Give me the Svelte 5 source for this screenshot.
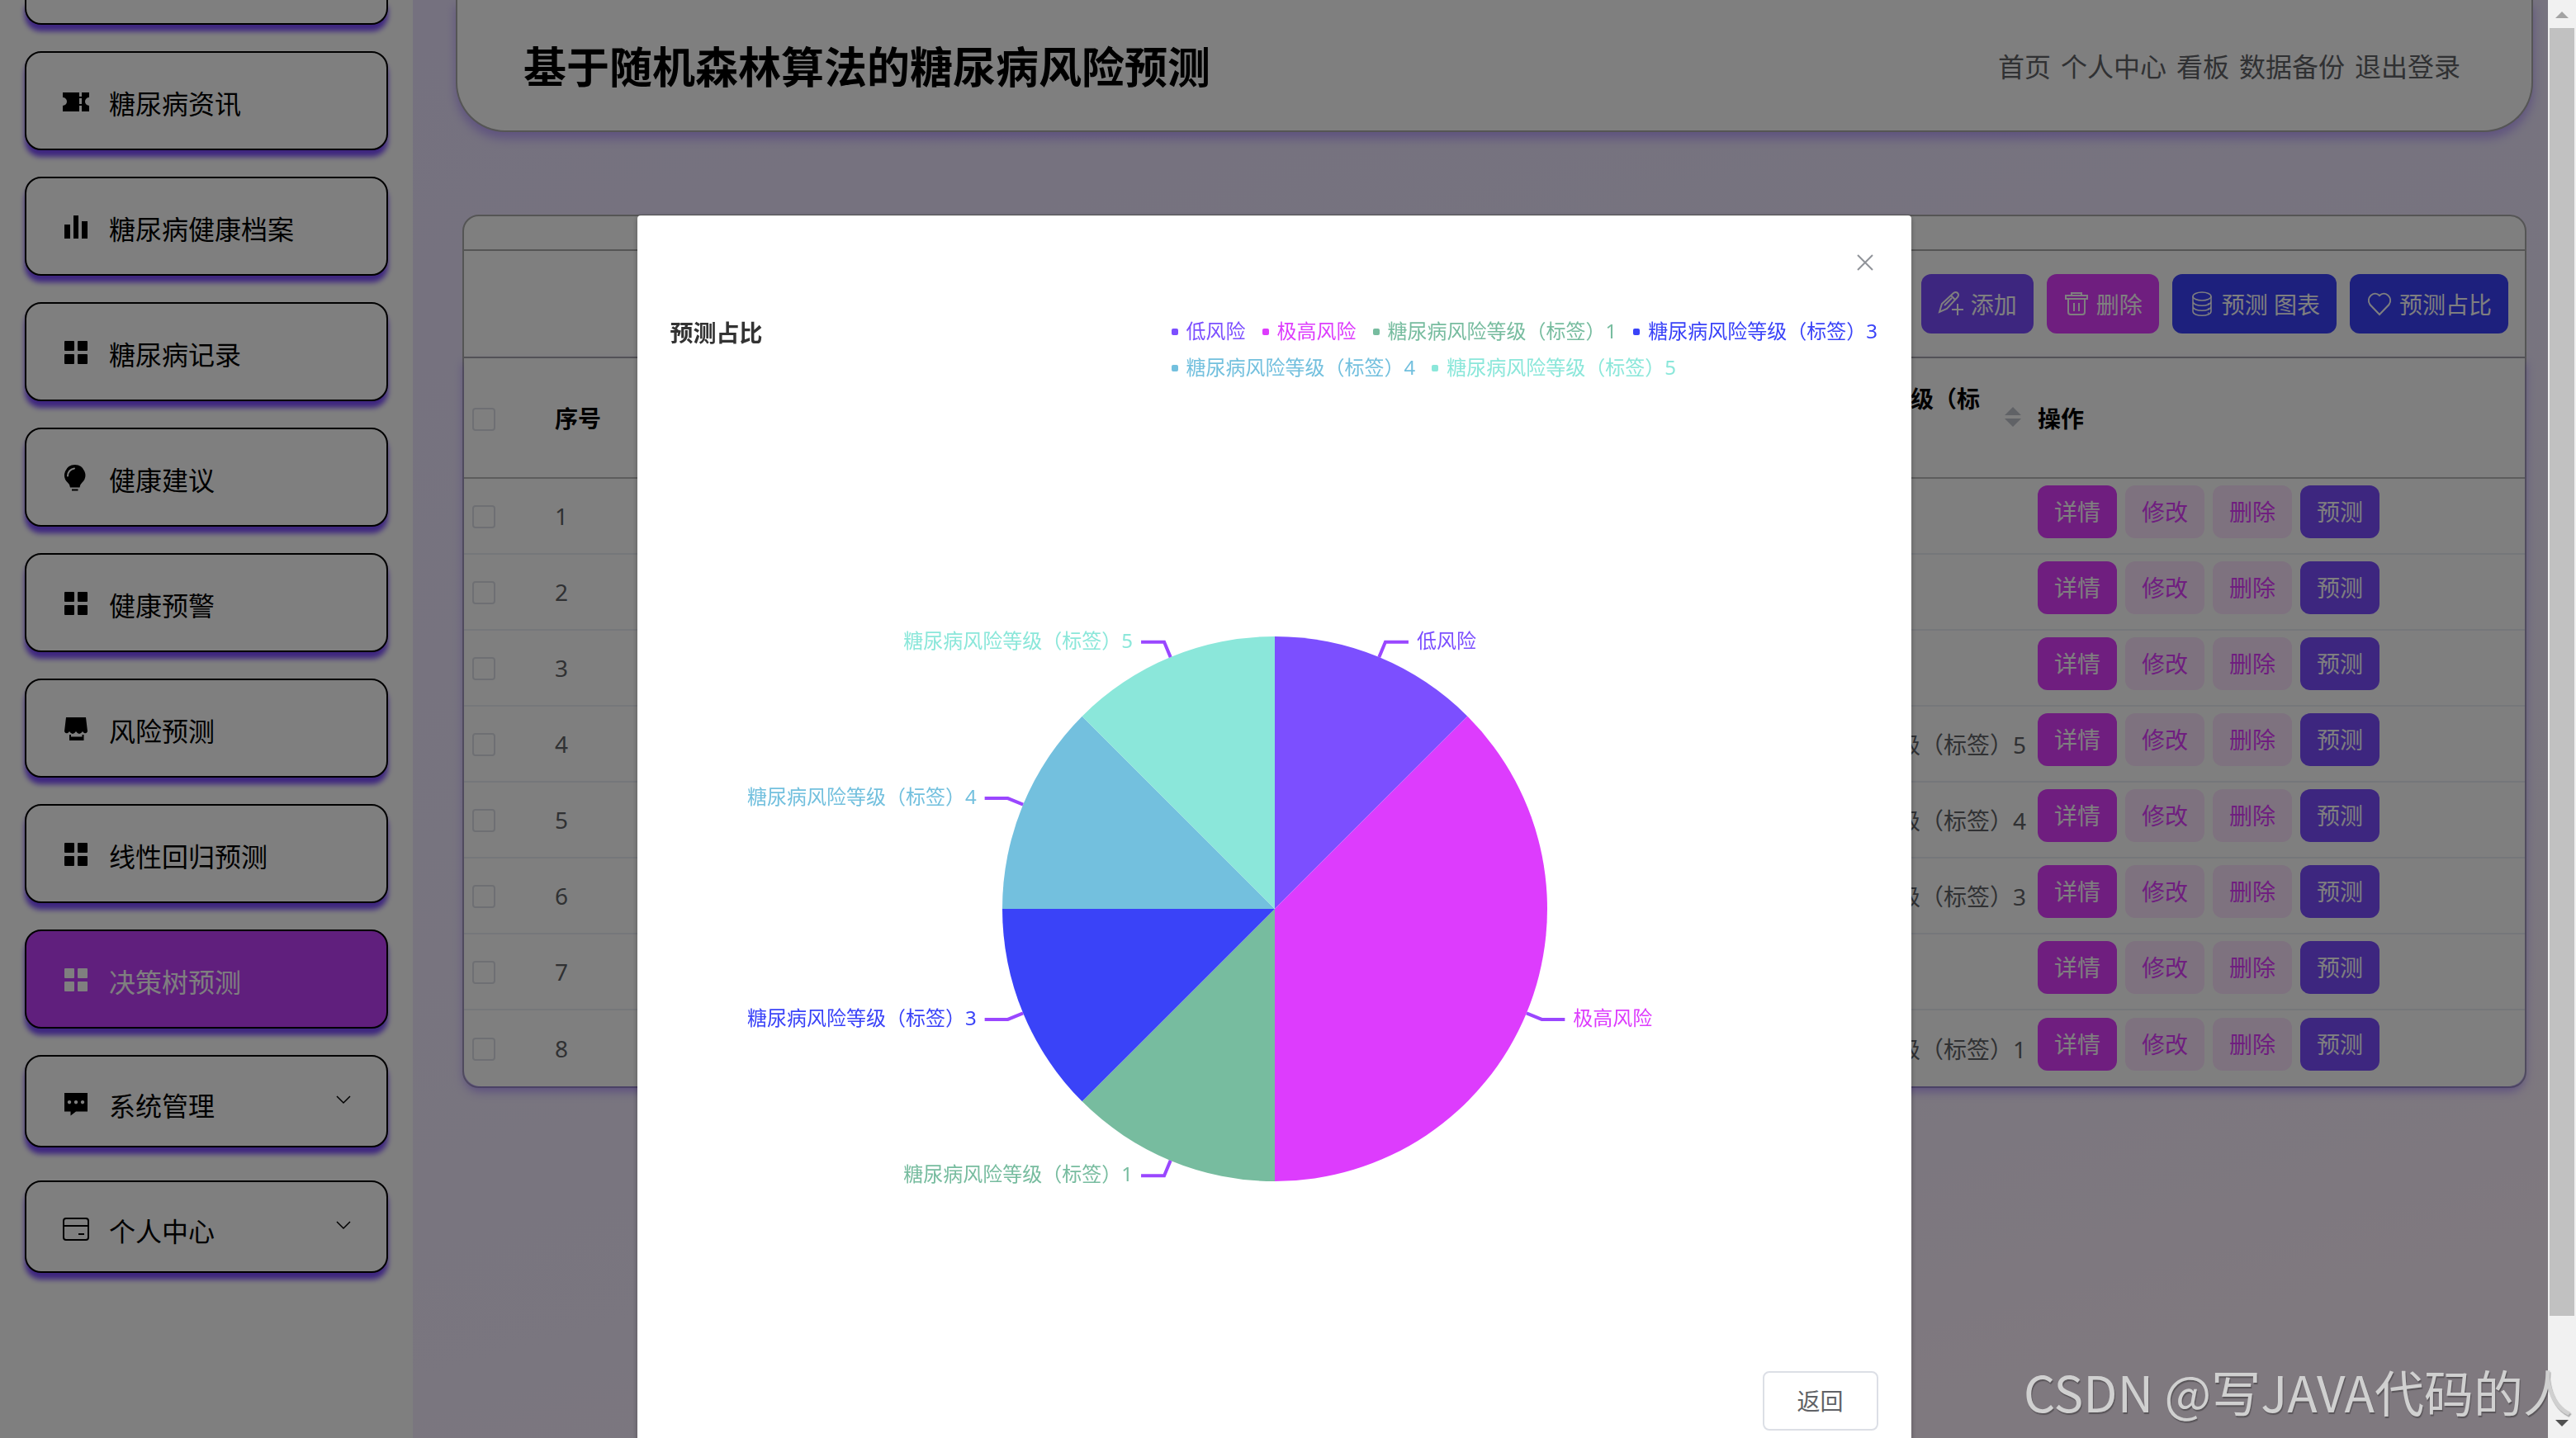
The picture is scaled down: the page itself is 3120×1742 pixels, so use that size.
<script lang="ts">
  type MenuItem = { label: string; icon: string; active?: boolean; sub?: boolean };
  type Slice = { name: string; value: number; color: string };

  const menu: MenuItem[] = [
    { label: '糖尿病资讯', icon: 'ticket' },
    { label: '糖尿病健康档案', icon: 'histogram' },
    { label: '糖尿病记录', icon: 'grid' },
    { label: '健康建议', icon: 'bulb' },
    { label: '健康预警', icon: 'grid' },
    { label: '风险预测', icon: 'shop' },
    { label: '线性回归预测', icon: 'grid' },
    { label: '决策树预测', icon: 'grid', active: true },
    { label: '系统管理', icon: 'chat', sub: true },
    { label: '个人中心', icon: 'postcard', sub: true }
  ];

  const links = ['首页', '个人中心', '看板', '数据备份', '退出登录'];

  const rows = [
    { id: 1, level: '' },
    { id: 2, level: '' },
    { id: 3, level: '' },
    { id: 4, level: '糖尿病风险等级（标签）5' },
    { id: 5, level: '糖尿病风险等级（标签）4' },
    { id: 6, level: '糖尿病风险等级（标签）3' },
    { id: 7, level: '' },
    { id: 8, level: '糖尿病风险等级（标签）1' }
  ];

  const slices: Slice[] = [
    { name: '低风险', value: 1, color: '#7c4fff' },
    { name: '极高风险', value: 3, color: '#dd3cfd' },
    { name: '糖尿病风险等级（标签）1', value: 1, color: '#77bc9f' },
    { name: '糖尿病风险等级（标签）3', value: 1, color: '#3a43f8' },
    { name: '糖尿病风险等级（标签）4', value: 1, color: '#73c0de' },
    { name: '糖尿病风险等级（标签）5', value: 1, color: '#8be7da' }
  ];

  // pie geometry, in viewBox units
  const cx = 732;
  const cy = 634;
  const r = 330;

  const point = (angle: number, radius: number) => [
    cx + radius * Math.sin(angle),
    cy - radius * Math.cos(angle)
  ];

  const total = slices.reduce((sum, s) => sum + s.value, 0);
  let start = 0;

  const pie = slices.map((s) => {
    const end = start + (s.value / total) * Math.PI * 2;
    const mid = (start + end) / 2;
    const [x1, y1] = point(start, r);
    const [x2, y2] = point(end, r);
    const [ex, ey] = point(mid, r);
    const [bx, by] = point(mid, r + 20);
    const side = Math.sin(mid) > 0 ? 1 : -1;
    const large = end - start > Math.PI ? 1 : 0;
    start = end;
    return {
      ...s,
      d: `M${cx} ${cy}L${x1} ${y1}A${r} ${r} 0 ${large} 1 ${x2} ${y2}Z`,
      line: `${ex},${ey} ${bx},${by} ${bx + side * 28},${by}`,
      tx: bx + side * 38,
      ty: by + 7,
      anchor: side > 0 ? 'start' : 'end'
    };
  });

  let open = $state(true);
</script>

{#snippet menuIcon(name: string)}
  <svg class="menu-icon" viewBox="0 0 32 32" aria-hidden="true">
    {#if name === 'ticket'}
      <path d="M0 5h20v23H0v-7a5 5 0 0 0 0-10zM23 5h9v6a5 5 0 0 0 0 10v7h-9zM20 10h3v2h-3zM20 19h3v2h-3z" />
    {:else if name === 'histogram'}
      <path d="M2 13h7v17H2zM13 2h6v28h-6zM23 9h7v21h-7z" />
    {:else if name === 'grid'}
      <rect x="2" y="2" width="12" height="12" rx="1" />
      <rect x="18" y="2" width="12" height="12" rx="1" />
      <rect x="2" y="18" width="12" height="12" rx="1" />
      <rect x="18" y="18" width="12" height="12" rx="1" />
    {:else if name === 'bulb'}
      <path d="M14.7 0a12.6 12.6 0 0 1 8.6 21.8q-2.8 2.4-2.8 5.7H9q0-3.3-2.9-5.7A12.6 12.6 0 0 1 14.7 0zM11 29.5h7.5v2H11z" />
      <path class="shine" d="M6 13.5q.5-7.5 8-9" />
    {:else if name === 'shop'}
      <path d="M4 2h24l2 17q-1 3-4 2-1.5-1-2-2-2 3-4 3t-4-3q-2 3-4 3t-4-3q-.5 1-2 2-3 1-4-2z" />
      <path d="M8 23h2v2.5h13.5V23h2v7H8z" />
    {:else if name === 'chat'}
      <path fill-rule="evenodd" d="M2 3h28v22.5H16l-6.5 5v-5H2zM8 12a2.2 2.2 0 1 0 .01 0zM16 12a2.2 2.2 0 1 0 .01 0zM24 12a2.2 2.2 0 1 0 .01 0z" />
    {:else if name === 'postcard'}
      <g class="outline">
        <rect x="1" y="3" width="30" height="26" rx="3" />
        <path d="M1 12h30M19 22h7" />
      </g>
    {/if}
  </svg>
{/snippet}

<div class="app">
  <aside class="sidebar">
    <div class="menu-item cut"></div>
    {#each menu as item}
      <a href="#menu" class="menu-item" class:active={item.active} class:sub={item.sub}>
        {@render menuIcon(item.icon)}
        <span class="menu-label">{item.label}</span>
        {#if item.sub}
          <svg class="chevron" viewBox="0 0 20 12" aria-hidden="true"><path d="M2 1l8 8 8-8" /></svg>
        {/if}
      </a>
    {/each}
  </aside>

  <main class="main">
    <header class="top">
      <h1>基于随机森林算法的糖尿病风险预测</h1>
      <nav>
        {#each links as link}
          <a href="#nav">{link}</a>
        {/each}
      </nav>
    </header>

    <section class="card">
      <div class="card-head"></div>
      <div class="toolbar">
        <button class="tool violet">
          <svg viewBox="0 0 32 32" aria-hidden="true"><path d="M2 26l3-10L19 3q3-2 5 0t0 5L11 22zM16 6l5 5M8 18l9-9M17 23h14M24 16v14" /></svg>
          添加
        </button>
        <button class="tool pink">
          <svg viewBox="0 0 32 32" aria-hidden="true"><path d="M10 6V3h12v3M3 6h26v4H3zM6 10v16q0 3 3 3h14q3 0 3-3V10M13 15v10M19 15v10" /></svg>
          删除
        </button>
        <button class="tool blue">
          <svg class="thin" viewBox="0 0 32 32" aria-hidden="true"><ellipse cx="16" cy="7" rx="11" ry="5" /><path d="M5 7v18c0 7 22 7 22 0V7M5 13c0 7 22 7 22 0M5 19c0 7 22 7 22 0M23 16h1M23 22h1M23 27h1" /></svg>
          预测 图表
        </button>
        <button class="tool blue">
          <svg viewBox="0 0 32 32" aria-hidden="true"><path d="M16 29L4.5 17C-1 9 9-1 16 6c7-7 17 3 11.5 11z" /></svg>
          预测占比
        </button>
      </div>

      <table>
        <colgroup>
          <col class="c-check" />
          <col class="c-index" />
          <col />
          <col class="c-level" />
          <col class="c-ops" />
        </colgroup>
        <thead>
          <tr>
            <th><input type="checkbox" aria-label="全选" /></th>
            <th>序号</th>
            <th></th>
            <th>
              <div class="sortable">
                <span>糖尿病风险等级（标签）</span>
                <svg viewBox="0 0 20 24" aria-hidden="true"><path d="M10 0l10 10H0zM10 24L0 14h20z" /></svg>
              </div>
            </th>
            <th>操作</th>
          </tr>
        </thead>
        <tbody>
          {#each rows as row (row.id)}
            <tr>
              <td><input type="checkbox" aria-label={String(row.id)} /></td>
              <td>{row.id}</td>
              <td></td>
              <td>{row.level}</td>
              <td>
                <div class="ops">
                  <button class="pink">详情</button>
                  <button class="pale">修改</button>
                  <button class="pale">删除</button>
                  <button class="violet">预测</button>
                </div>
              </td>
            </tr>
          {/each}
        </tbody>
      </table>
    </section>
  </main>

  <div class="scrollbar" aria-hidden="true">
    <svg class="up" viewBox="0 0 16 8"><path d="M8 0l8 8H0z" /></svg>
    <div class="thumb"></div>
    <svg class="down" viewBox="0 0 16 8"><path d="M0 0h16L8 8z" /></svg>
  </div>
</div>

{#if open}
  <div class="overlay">
    <div class="dialog" role="dialog" aria-modal="true" aria-labelledby="dialog-title">
      <div class="dialog-head">
        <button class="close" aria-label="关闭" onclick={() => (open = false)}>
          <svg viewBox="0 0 20 20" aria-hidden="true"><path d="M1 1l18 18M19 1L1 19" /></svg>
        </button>
      </div>

      <div class="chart-head">
        <h2 id="dialog-title">预测占比</h2>
        <ul class="legend">
          {#each slices as s}
            <li style="color: {s.color}"><i></i>{s.name}</li>
          {/each}
        </ul>
      </div>

      <svg class="chart" viewBox="0 0 1463 1174">
        {#each pie as p}
          <path d={p.d} fill={p.color} />
          <polyline points={p.line} />
          <text x={p.tx} y={p.ty} fill={p.color} text-anchor={p.anchor}>{p.name}</text>
        {/each}
      </svg>

      <div class="dialog-foot">
        <button class="back" onclick={() => (open = false)}>返回</button>
      </div>
    </div>
  </div>
{/if}

<div class="watermark">CSDN @写JAVA代码的人</div>

<style>
  :global(body) {
    overflow: hidden;
    font-family: 'Noto Sans', 'Noto Sans CJK SC', sans-serif;
    font-size: 28px;
    color: #606266;
  }

  * {
    box-sizing: border-box;
  }

  a {
    color: inherit;
    text-decoration: none;
  }

  button {
    border: none;
    font: inherit;
    cursor: pointer;
  }

  .app {
    display: grid;
    grid-template-columns: 500px 1fr 34px;
    height: 100vh;
    overflow: hidden;
    background: linear-gradient(165deg, #eae2ff 0%, #efe8ff 45%, #f4ecff 70%, #fff2fe 90%);
  }

  /* sidebar */
  .sidebar {
    display: flex;
    flex-direction: column;
    gap: 32px;
    padding: 0 30px;
    background: #fff;
    overflow: hidden;
  }

  .menu-item {
    display: flex;
    flex-shrink: 0;
    align-items: center;
    gap: 24px;
    height: 120px;
    padding: 0 42px 0 44px;
    border: 2px solid #000;
    border-radius: 20px;
    background: #fff;
    box-shadow: 0 8px 6px #7c4dff;
    color: #000;
    font-size: 32px;
    line-height: 40px;
  }

  .menu-item.cut {
    height: 30px;
    border-top: none;
    border-radius: 0 0 20px 20px;
  }

  .menu-item.active {
    background: #c03efa;
    color: #fff;
  }

  .menu-item.sub {
    height: 112px;
    margin-bottom: 8px;
    padding-top: 4px;
  }

  .menu-icon {
    width: 32px;
    height: 32px;
    margin-top: 2px;
    fill: currentColor;
  }

  .menu-label {
    flex: 1;
    padding-top: 8px;
  }

  .shine {
    fill: none;
    stroke: #fff;
    stroke-width: 2;
    stroke-linecap: round;
  }

  .outline {
    fill: none;
    stroke: currentColor;
    stroke-width: 2;
  }

  .chevron {
    width: 20px;
    height: 12px;
    margin-bottom: 6px;
    fill: none;
    stroke: currentColor;
    stroke-width: 1.5;
  }

  /* page header */
  .main {
    min-width: 0;
  }

  .top {
    display: flex;
    align-items: center;
    justify-content: space-between;
    height: 160px;
    margin: 0 18px 0 52px;
    padding: 4px 86px 0 80px;
    border: 2px solid #aaa;
    border-top: none;
    border-radius: 0 0 60px 60px;
    background: #fff;
    box-shadow: 0 8px 12px rgba(124, 77, 255, 0.4);
  }

  h1 {
    margin: 0;
    color: #000;
    font-size: 52px;
    line-height: 64px;
  }

  nav {
    display: flex;
    gap: 12px;
    font-size: 32px;
    line-height: 40px;
  }

  /* card */
  .card {
    margin: 100px 26px 0 60px;
    border: 2px solid #aaa;
    border-radius: 20px;
    background: #fff;
  }

  .card-head {
    height: 42px;
    border-bottom: 2px solid #aaa;
  }

  .toolbar {
    display: flex;
    justify-content: flex-end;
    gap: 16px;
    padding: 28px 20px;
    border-bottom: 2px solid #aaa;
  }

  .tool {
    display: flex;
    align-items: center;
    gap: 8px;
    height: 72px;
    padding: 0 20px;
    border-radius: 12px;
  }

  .tool svg {
    width: 32px;
    height: 32px;
    fill: none;
    stroke: currentColor;
    stroke-width: 2;
  }

  .tool .thin {
    stroke-width: 1.5;
  }

  .violet {
    background: #7b4dff;
    color: #fff;
  }

  .pink {
    background: #df3dff;
    color: #fff;
  }

  .blue {
    background: #3a40fb;
    color: #fff;
  }

  .pale {
    background: #fce4ff;
    color: #df3dff;
  }

  table {
    width: 100%;
    table-layout: fixed;
    border-collapse: separate;
    border-spacing: 0;
    border-radius: 0 0 20px 20px;
    box-shadow: 0 6px 12px rgba(124, 77, 255, 0.5);
  }

  .c-check {
    width: 100px;
  }

  .c-index {
    width: 160px;
  }

  .c-level {
    width: 338px;
  }

  .c-ops {
    width: 600px;
  }

  th,
  td {
    padding: 0 0 0 10px;
    text-align: left;
    white-space: nowrap;
  }

  th {
    height: 146px;
    padding-top: 2px;
    border-bottom: 2px solid #bbb;
    color: #000;
    line-height: 48px;
  }

  td {
    height: 92px;
    border-bottom: 2px solid #ebeef5;
  }

  tbody tr:last-child td {
    border-bottom: none;
  }

  input[type='checkbox'] {
    display: block;
    appearance: none;
    width: 28px;
    height: 28px;
    margin: 2px 0 0;
    border: 2px solid #dcdfe6;
    border-radius: 4px;
    background: #fff;
  }

  .sortable {
    display: flex;
    align-items: center;
    gap: 28px;
    padding-left: 16px;
    white-space: normal;
  }

  .sortable span {
    width: 254px;
  }

  .sortable svg {
    width: 20px;
    height: 24px;
    margin-bottom: 4px;
    fill: #c0c4cc;
  }

  .ops {
    display: flex;
    gap: 10px;
    margin-bottom: 10px;
  }

  .ops button {
    width: 96px;
    height: 64px;
    padding: 0 0 2px;
    border-radius: 12px;
  }

  /* window scrollbar */
  .scrollbar {
    display: flex;
    flex-direction: column;
    align-items: center;
    padding: 14px 2px;
    background: #f1f1f1;
  }

  .scrollbar svg {
    width: 16px;
    height: 8px;
    fill: #505050;
  }

  .scrollbar .up {
    fill: #a3a3a3;
  }

  .thumb {
    width: 100%;
    height: 91%;
    margin: 12px 0 auto;
    background: #c1c1c1;
  }

  /* dialog */
  .overlay {
    position: fixed;
    inset: 0 34px 0 0;
    overflow: hidden;
    background: rgba(0, 0, 0, 0.5);
  }

  .dialog {
    width: 50%;
    margin: 15vh auto 0;
    padding: 0 40px 40px;
    border-radius: 4px;
    background: #fff;
    box-shadow: 0 2px 6px rgba(0, 0, 0, 0.3);
  }

  .dialog-head {
    display: flex;
    align-items: center;
    justify-content: flex-end;
    height: 118px;
    padding-bottom: 4px;
  }

  .close {
    display: flex;
    padding: 6px;
    background: none;
  }

  .close svg {
    width: 20px;
    height: 20px;
    fill: none;
    stroke: #909399;
    stroke-width: 2;
  }

  .chart-head {
    display: flex;
    justify-content: space-between;
  }

  h2 {
    margin: 0;
    padding-top: 2px;
    color: #333;
    font-size: 28px;
    line-height: 44px;
  }

  .legend {
    display: flex;
    flex-wrap: wrap;
    column-gap: 20px;
    width: 856px;
    margin: 0;
    padding: 0;
    list-style: none;
    font-size: 24px;
    line-height: 44px;
  }

  .legend li {
    display: flex;
    align-items: center;
    gap: 10px;
  }

  .legend i {
    width: 8px;
    height: 8px;
    margin-top: 2px;
    border-radius: 2px;
    background: currentColor;
  }

  .chart {
    display: block;
    width: 100%;
    font-size: 24px;
  }

  .chart polyline {
    fill: none;
    stroke: #9a47ff;
    stroke-width: 4;
  }

  .dialog-foot {
    display: flex;
    justify-content: flex-end;
    padding-top: 20px;
  }

  .back {
    width: 140px;
    height: 72px;
    padding: 0 0 2px;
    border: 2px solid #dcdfe6;
    border-radius: 8px;
    background: #fff;
    color: #606266;
  }

  .watermark {
    position: fixed;
    right: 4px;
    bottom: 12px;
    color: #d0d0d0;
    font-family: 'Noto Sans CJK SC', sans-serif;
    font-size: 60px;
    line-height: 90px;
    text-shadow: 1px 2px 1px rgba(0, 0, 0, 0.3);
  }
</style>
